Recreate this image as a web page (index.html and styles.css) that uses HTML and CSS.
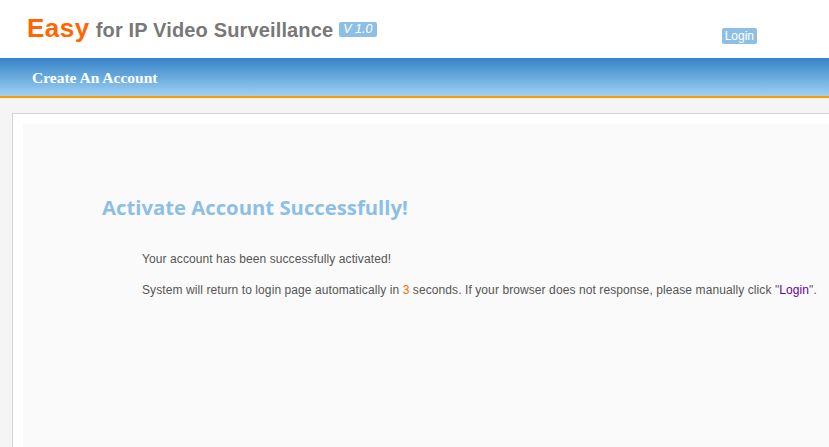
FILE: index.html
```html
<!DOCTYPE html>
<html>
<head>
<meta charset="utf-8">
<link rel="stylesheet" href="styles.css">
</head>
<body>
<header class="top">
  <div class="logo">
    <span class="easy">Easy</span>
    <span class="tag">for IP Video Surveillance</span>
    <span class="ver">V 1.0</span>
  </div>
  <a class="login-btn" href="#">Login</a>
</header>
<nav class="bar">
  <span class="bar-title">Create An Account</span>
</nav>
<main class="page">
  <div class="box">
    <div class="panel">
      <h1 class="title">Activate Account Successfully!</h1>
      <p class="msg">Your account has been successfully activated!</p>
      <p class="msg">System will return to login page automatically in <span class="count">3</span> seconds. If your browser does not response, please manually click "<a class="link" href="#">Login</a>".</p>
    </div>
  </div>
</main>
</body>
</html>
```

FILE: styles.css
```css
html, body {
  margin: 0;
  padding: 0;
  height: 100%;
  overflow: hidden;
}
body {
  background: #f5f5f5;
  font-family: "Liberation Sans", Arial, sans-serif;
  width: 829px;
}
.top {
  height: 58px;
  background: #fff;
  display: flex;
  align-items: flex-start;
}
.logo {
  display: flex;
  align-items: baseline;
  padding: 13px 0 0 27px;
  font-weight: bold;
  white-space: nowrap;
}
.easy {
  color: #ff6600;
  font-size: 26px;
  letter-spacing: 0.5px;
}
.tag {
  color: #787878;
  font-size: 20px;
  letter-spacing: 0.15px;
  margin-left: 6px;
}
.ver {
  margin-left: 6px;
  background: #8dbfe5;
  color: #fff;
  font-size: 12.5px;
  font-style: italic;
  font-weight: normal;
  padding: 1px 5px 1px 4px;
  border-radius: 2px;
  align-self: flex-start;
  margin-top: 9px;
  line-height: 13px;
}
.login-btn {
  margin-left: auto;
  margin-right: 72px;
  margin-top: 28px;
  background: #8dbfe5;
  color: #fff;
  font-size: 12px;
  line-height: 16px;
  padding: 0 3px;
  border-radius: 2px;
  text-decoration: none;
}
.bar {
  background: linear-gradient(to bottom, #3683c8 0%, #68a9dd 50%, #a0d1f1 100%);
  border-bottom: 2px solid #ff9900;
  display: flex;
  align-items: center;
  padding: 1px 0 0 32px;
  box-sizing: border-box;
  height: 40px;
}
.bar-title {
  font-family: "Liberation Serif", "Times New Roman", serif;
  font-weight: bold;
  font-size: 15.5px;
  color: #fff;
}
.page {
  padding: 15px 0 0 12px;
}
.box {
  border: 1px solid #d3d3d3;
  border-right: none;
  border-bottom: none;
  background: #fff;
  padding: 10px 0 0 10px;
  height: 330px;
}
.panel {
  background: #fafafa;
  height: 100%;
  padding: 71px 0 0 79px;
  box-sizing: border-box;
}
.title {
  margin: 0 0 32px 0;
  font-family: "Open Sans", "Liberation Sans", sans-serif;
  font-size: 20.3px;
  letter-spacing: 0;
  font-weight: bold;
  color: #8dbfe5;
  line-height: 24px;
}
.msg {
  margin: 0 0 15px 40px;
  font-size: 12px;
  letter-spacing: 0.09px;
  line-height: 16px;
  color: #555;
}
.count {
  color: #ff6600;
}
.link {
  color: #660099;
  text-decoration: none;
}
```
